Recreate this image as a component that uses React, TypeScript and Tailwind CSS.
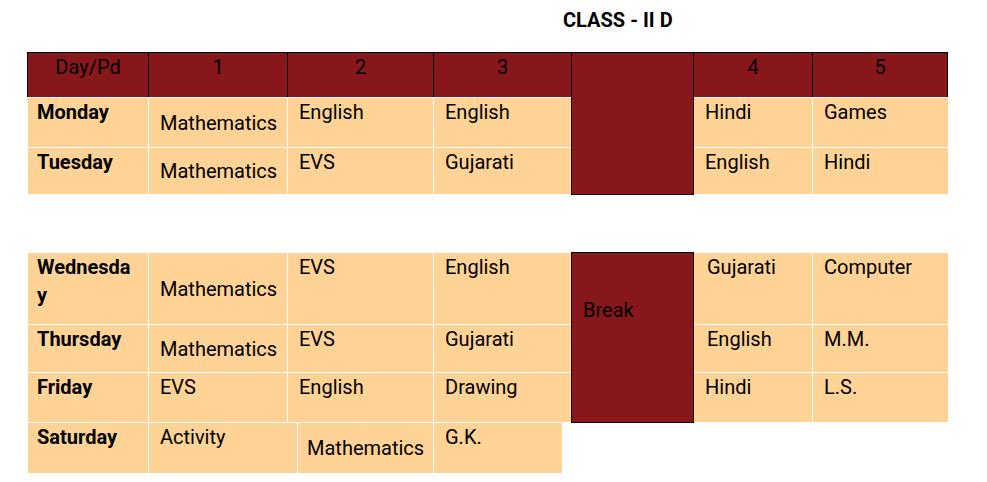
const HEAD = "bg-[#87171a]";
const PEACH = "bg-[#ffd395]";

type Cell = { w: string; text?: React.ReactNode; mid?: boolean; day?: boolean; pl?: string };

const Row = ({ cells, h }: { cells: Cell[]; h: string }) => (
  <div className={`flex gap-px ml-px ${h}`}>
    {cells.map((c, i) => (
      <div
        key={i}
        className={`${c.w} ${PEACH} ${c.day ? "pl-[9px] font-bold" : c.pl ?? "pl-[11px]"} ${
          c.mid ? "flex items-center" : ""
        }`}
      >
        <span>{c.text}</span>
      </div>
    ))}
  </div>
);

const HeadCell = ({ w, text, edge }: { w: string; text?: string; edge: string }) => (
  <div className={`${w} h-[45px] ${HEAD} border-black ${edge} text-center`}>{text}</div>
);

const Break = ({ h, text }: { h: string; text?: string }) => (
  <div className={`w-[123px] ${h} ${HEAD} border border-black shrink-0 pl-[11px] ${text ? "pt-[43px]" : ""}`}>
    {text}
  </div>
);

export default function App() {
  return (
    <div className="min-h-screen bg-white font-['Roboto',sans-serif] text-[20px] leading-[28px] text-black pt-[6px]">
      <div className="ml-[563px] font-bold">CLASS - II D</div>

      {/* first table */}
      <div className="flex mt-[18px] ml-[27px]">
        <div className="flex flex-col gap-px">
          <div className="flex">
            <HeadCell w="w-[122px]" text="Day/Pd" edge="border-l border-t border-r" />
            <HeadCell w="w-[139px]" text="1" edge="border-t border-r" />
            <HeadCell w="w-[146px]" text="2" edge="border-t border-r" />
            <HeadCell w="w-[137px]" text="3" edge="border-t" />
          </div>
          <Row
            h="h-[49px]"
            cells={[
              { w: "w-[120px]", text: "Monday", day: true },
              { w: "w-[138px]", text: "Mathematics", mid: true },
              { w: "w-[145px]", text: "English" },
              { w: "w-[137px]", text: "English" },
            ]}
          />
          <Row
            h="h-[46px]"
            cells={[
              { w: "w-[120px]", text: "Tuesday", day: true },
              { w: "w-[138px]", text: "Mathematics", mid: true },
              { w: "w-[145px]", text: "EVS" },
              { w: "w-[137px]", text: "Gujarati" },
            ]}
          />
        </div>
        <Break h="h-[143px]" />
        <div className="flex flex-col gap-px">
          <div className="flex">
            <HeadCell w="w-[119px]" text="4" edge="border-t border-r" />
            <HeadCell w="w-[135px]" text="5" edge="border-t border-r" />
          </div>
          <div className="flex gap-px h-[49px]">
            <div className={`w-[118px] ${PEACH} pl-[11px]`}>Hindi</div>
            <div className={`w-[135px] ${PEACH} pl-[11px]`}>Games</div>
          </div>
          <div className="flex gap-px h-[46px]">
            <div className={`w-[118px] ${PEACH} pl-[11px]`}>English</div>
            <div className={`w-[135px] ${PEACH} pl-[11px]`}>Hindi</div>
          </div>
        </div>
      </div>

      {/* second table */}
      <div className="mt-[57px] ml-[27px]">
        <div className="flex">
          <div className="flex flex-col gap-px mt-px">
            <Row
              h="h-[71px]"
              cells={[
                { w: "w-[120px]", text: <>Wednesda<br />y</>, day: true },
                { w: "w-[138px]", text: "Mathematics", mid: true },
                { w: "w-[145px]", text: "EVS" },
                { w: "w-[137px]", text: "English" },
              ]}
            />
            <Row
              h="h-[47px]"
              cells={[
                { w: "w-[120px]", text: "Thursday", day: true },
                { w: "w-[138px]", text: "Mathematics", mid: true },
                { w: "w-[145px]", text: "EVS" },
                { w: "w-[137px]", text: "Gujarati" },
              ]}
            />
            <Row
              h="h-[49px]"
              cells={[
                { w: "w-[120px]", text: "Friday", day: true },
                { w: "w-[138px]", text: "EVS" },
                { w: "w-[145px]", text: "English" },
                { w: "w-[137px]", text: "Drawing" },
              ]}
            />
          </div>
          <Break h="h-[171px]" text="Break" />
          <div className="flex flex-col gap-px mt-px">
            <div className="flex gap-px h-[71px]">
              <div className={`w-[118px] ${PEACH} pl-[13px]`}>Gujarati</div>
              <div className={`w-[135px] ${PEACH} pl-[11px]`}>Computer</div>
            </div>
            <div className="flex gap-px h-[47px]">
              <div className={`w-[118px] ${PEACH} pl-[13px]`}>English</div>
              <div className={`w-[135px] ${PEACH} pl-[11px]`}>M.M.</div>
            </div>
            <div className="flex gap-px h-[49px]">
              <div className={`w-[118px] ${PEACH} pl-[11px]`}>Hindi</div>
              <div className={`w-[135px] ${PEACH} pl-[11px]`}>L.S.</div>
            </div>
          </div>
        </div>
        <Row
          h="h-[50px]"
          cells={[
            { w: "w-[120px]", text: "Saturday", day: true },
            { w: "w-[148px]", text: "Activity" },
            { w: "w-[135px]", text: "Mathematics", mid: true, pl: "pl-[9px]" },
            { w: "w-[128px]", text: "G.K." },
          ]}
        />
      </div>
    </div>
  );
}
